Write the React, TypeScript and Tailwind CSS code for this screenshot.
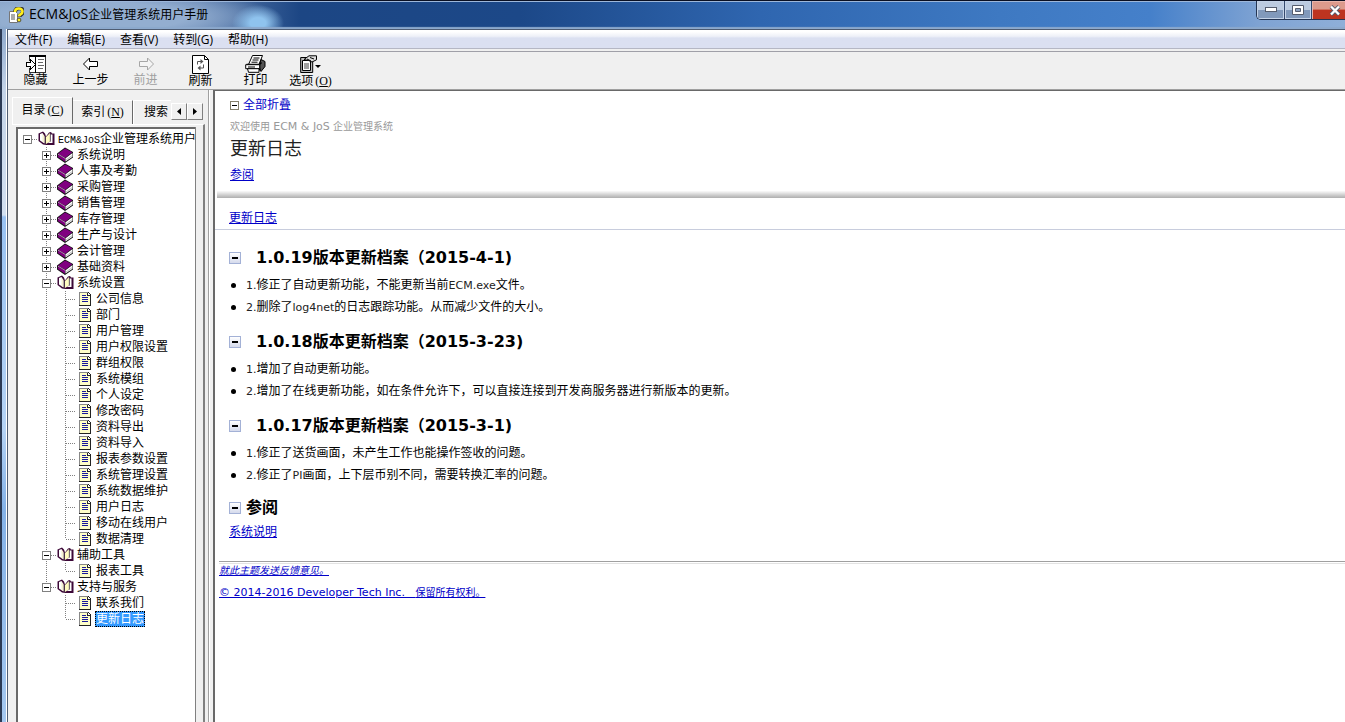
import React from "react";

const SONG = "font-['Liberation_Mono','Noto_Sans_CJK_SC',monospace]";
const UI = "font-['Open_Sans','Noto_Sans_CJK_SC',sans-serif]";
const DOC = "font-['DejaVu_Sans','Noto_Sans_CJK_SC',sans-serif]";

type Kind = "open" | "closed" | "page";
type Row = { depth: number; kind: Kind; label: string; last?: boolean; lastParent?: boolean; selected?: boolean };

const closed = ["系统说明", "人事及考勤", "采购管理", "销售管理", "库存管理", "生产与设计", "会计管理", "基础资料"];
const settings = [
  "公司信息", "部门", "用户管理", "用户权限设置", "群组权限", "系统模组", "个人设定", "修改密码",
  "资料导出", "资料导入", "报表参数设置", "系统管理设置", "系统数据维护", "用户日志", "移动在线用户", "数据清理",
];

const rows: Row[] = [
  ...closed.map((label): Row => ({ depth: 1, kind: "closed", label })),
  { depth: 1, kind: "open", label: "系统设置" },
  ...settings.map((label, i): Row => ({ depth: 2, kind: "page", label, last: i === settings.length - 1 })),
  { depth: 1, kind: "open", label: "辅助工具" },
  { depth: 2, kind: "page", label: "报表工具", last: true },
  { depth: 1, kind: "open", label: "支持与服务", last: true },
  { depth: 2, kind: "page", label: "联系我们", lastParent: true },
  { depth: 2, kind: "page", label: "更新日志", last: true, lastParent: true, selected: true },
];

const versions = [
  { title: "1.0.19版本更新档案（2015-4-1)", items: ["1.修正了自动更新功能，不能更新当前ECM.exe文件。", "2.删除了log4net的日志跟踪功能。从而减少文件的大小。"] },
  { title: "1.0.18版本更新档案（2015-3-23)", items: ["1.增加了自动更新功能。", "2.增加了在线更新功能，如在条件允许下，可以直接连接到开发商服务器进行新版本的更新。"] },
  { title: "1.0.17版本更新档案（2015-3-1)", items: ["1.修正了送货画面，未产生工作也能操作签收的问题。", "2.修正了PI画面，上下层币别不同，需要转换汇率的问题。"] },
];

function ClosedBook() {
  return (
    <svg width="17" height="16" viewBox="0 0 17 16">
      <path d="M0 6.500 8 .5l8 4.500v5.500L8 16 0 10.500z" fill="#111" />
      <path d="M8.500 11.200 15.500 6v3.800L8.500 14.500z" fill="#fff" />
      <path d="M9 13l6-4.300" stroke="#999" strokeWidth=".7" />
      <path d="M1 6.700 8 1.400l7.300 3.900L8.300 10.800z" fill="#800080" />
      <path d="M.8 7.700v2.300L8 14.800v-3.300z" fill="#800080" />
      <path d="M1 7.200l7.200 4.200" stroke="#d9a6d9" strokeWidth=".8" />
    </svg>
  );
}

function OpenBook() {
  return (
    <svg width="17" height="16" viewBox="0 0 17 16">
      <path d="M.5 2.500 5 .5l2 2 1 3 3-4 2-.5 1 1.500h2.500v11.500H8.500L5 13.500.5 10z" fill="#3d0838" />
      <path d="M2 3l2.500-1 2 4v6.500L2 9.500z" fill="#fff" />
      <path d="M4.500 2.500 6.500 5v7l-2-1z" fill="#f4efcf" />
      <path d="M8 6 12 2v8.500L8 13z" fill="#fffbc0" />
      <path d="M12.500 3.500h2v8.500H9.500l3-1.500z" fill="#fff" />
      <path d="M7.300 5.500v8M12.300 2.500v8" stroke="#555" strokeWidth=".7" />
    </svg>
  );
}

function PageIcon() {
  return (
    <svg width="12" height="14" viewBox="0 0 12 14" shapeRendering="crispEdges">
      <path d="M0 0h9l3 3v11H0z" fill="#222" />
      <path d="M0 0h9v1H1v12H0z" fill="#888" />
      <path d="M1 1h7v3h3v9H1z" fill="#ffffc8" />
      <path d="M9 1v2h2z" fill="#fff" />
      <path d="M3 3.500h4M3 5.500h6M3 7.500h6M3 9.500h6" stroke="#1a1a9c" strokeWidth="1" />
    </svg>
  );
}

function Guide({ tail, stub }: { tail: boolean; stub: boolean }) {
  return (
    <svg width="19" height="16" viewBox="0 0 19 16" className="shrink-0" shapeRendering="crispEdges" aria-hidden="true">
      <path d={tail ? "M9.500 0v16" : "M9.500 0v8"} stroke="#808080" strokeDasharray="1 1" />
      {stub && <path d="M10 8.500h9" stroke="#808080" strokeDasharray="1 1" />}
    </svg>
  );
}

function Expander({ minus, root, last, label }: { minus: boolean; root?: boolean; last?: boolean; label: string }) {
  return (
    <button aria-label={label} className="block h-4 w-[19px] shrink-0">
      <svg width="19" height="16" viewBox="0 0 19 16" shapeRendering="crispEdges">
        {!root && <path d={last ? "M9.500 0v8" : "M9.500 0v16"} stroke="#808080" strokeDasharray="1 1" />}
        <path d="M14 8.500h5" stroke="#808080" strokeDasharray="1 1" />
        <rect x="5.500" y="4.500" width="8" height="8" fill="#fff" stroke="#808080" />
        <path d={minus ? "M7 8.500h5" : "M7 8.500h5M9.500 6v5"} stroke="#000" />
      </svg>
    </button>
  );
}

function TreeRow({ row }: { row: Row }) {
  return (
    <li className="flex h-4 items-center whitespace-nowrap">
      <span className="w-[19px] shrink-0" />
      {row.depth === 1 ? (
        <Expander minus={row.kind === "open"} last={row.last} label={row.label} />
      ) : (
        <>
          {row.lastParent ? <span className="w-[19px] shrink-0" /> : <Guide tail stub={false} />}
          <Guide tail={!row.last} stub />
        </>
      )}
      <span className="flex h-4 w-[19px] shrink-0 items-center justify-center">
        {row.kind === "closed" ? <ClosedBook /> : row.kind === "open" ? <OpenBook /> : <PageIcon />}
      </span>
      <a
        href="#topic"
        className={
          row.selected
            ? "ml-px block h-4 bg-[#3399ff] px-px leading-[18px] text-white outline-1 -outline-offset-1 outline-dotted outline-black"
            : "ml-0.5 block h-4 leading-[18px]"
        }
      >
        {row.label}
      </a>
    </li>
  );
}

function HelpIcon() {
  return (
    <svg width="16" height="16" viewBox="0 0 16 16">
      <path d="M1.500 4.500h6l2 2v9h-8z" fill="#fff" stroke="#777" />
      <path d="M3 8h4M3 10h4M3 12h4" stroke="#555" />
      <path d="M7 5c0-5 8-5 8-.5 0 3-3.500 2.500-3.500 5.500" fill="none" stroke="#333" strokeWidth="4" />
      <path d="M7 5c0-4.500 7.500-4.500 7.500-.5 0 2.800-3.500 2.500-3.500 5" fill="none" stroke="#ffee1c" strokeWidth="2.600" />
      <circle cx="11" cy="13" r="1.900" fill="#ffee1c" stroke="#333" strokeWidth=".8" />
    </svg>
  );
}

const toolIcons = {
  hide: (
    <svg width="20" height="18" viewBox="0 0 20 18" shapeRendering="crispEdges">
      <path d="M3.500 6V.5h16v17h-16V13" fill="#fff" stroke="#333" />
      <path d="M3 1h17" stroke="#000" strokeWidth="2" />
      <path d="M9.500 1v17" stroke="#000" />
      <path d="M12 4.500h6M12 7.500h5M12 10.500h6M12 13.500h5" stroke="#666" />
      <path d="M.5 7.500h4v-3l5 5-5 5v-3h-4z" fill="#fff" stroke="#000" />
    </svg>
  ),
  back: (
    <svg width="18" height="18" viewBox="0 0 18 18">
      <path d="M1.500 9 7.500 3v3.500h8v5h-8V15z" fill="#fff" stroke="#000" />
    </svg>
  ),
  forward: (
    <svg width="18" height="18" viewBox="0 0 18 18">
      <path d="M16.500 9l-6-6v3.500h-8v5h8V15z" fill="#f4f4f4" stroke="#a6a6a6" />
    </svg>
  ),
  refresh: (
    <svg width="17" height="19" viewBox="0 0 17 19">
      <path d="M.5.5h12l4 4v14H.5z" fill="#fff" stroke="#000" />
      <path d="M12.500.5v4h4" fill="none" stroke="#000" />
      <path d="M5.500 9.500V6.500h4M11.500 9.500v3.500h-4" fill="none" stroke="#555" />
      <path d="M8.500 4l3 2.500-3 2.500zM8.500 10.500l-3 2.500 3 2.500z" fill="#555" />
    </svg>
  ),
  print: (
    <svg width="21" height="18" viewBox="0 0 21 18">
      <path d="M3.500 9.500 7.500.5h10l-3.500 9" fill="#fff" stroke="#000" />
      <path d="M8.500 3h6M7.500 5h6M6.500 7.200h6" stroke="#000" />
      <path d="M16 4.500l4 2v5l-4 5-2-5z" fill="#555" stroke="#000" />
      <path d="M1.500 9.500h13l2-2M14.500 9.500v6" fill="none" stroke="#000" strokeWidth="1.500" />
      <path d="M.7 9.700h14v4H.7z" fill="#fff" stroke="#000" />
      <path d="M2.500 13.700h11.500v3.600H3.500z" fill="#fff" stroke="#000" />
      <path d="M3 12h7" stroke="#000" />
    </svg>
  ),
  options: (
    <svg width="21" height="18" viewBox="0 0 21 18">
      <path d="M.7 2.500h12v15H.7z" fill="#bbb" stroke="#000" />
      <path d="M2.500 5.500h8v10h-8z" fill="#fff" stroke="#000" />
      <path d="M4 9h5M4 11h5M4 13h5" stroke="#444" />
      <path d="M4 4.500 9 .8h7.500v4L12 7 8.500 5.500z" fill="#ddd" stroke="#000" />
      <path d="M7 4l4 2M10 2.500l4 1.500" stroke="#000" />
      <path d="M15 10h6l-3 3z" fill="#000" />
    </svg>
  ),
};

function Hotkey({ letter }: { letter: string }) {
  return <span className="ml-0.5 font-['Liberation_Serif',serif] text-xs">(<u>{letter}</u>)</span>;
}

function Tool({ icon, label, hotkey, disabled }: { icon: React.ReactNode; label: string; hotkey?: string; disabled?: boolean }) {
  return (
    <button disabled={disabled} className={`flex w-[55px] flex-col items-center whitespace-nowrap ${disabled ? "text-[#a0a0a0]" : "text-black"}`}>
      <span className="flex h-5 items-center">{icon}</span>
      <span className="leading-4">
        {label}
        {hotkey && <Hotkey letter={hotkey} />}
      </span>
    </button>
  );
}

function Toggle({ label }: { label: string }) {
  return (
    <button aria-label={label} className="flex size-3 shrink-0 items-center justify-center border border-[#a3b1d6] bg-linear-to-b from-white to-[#d5daec]">
      <span className="h-0.5 w-1.5 bg-black" />
    </button>
  );
}

/* Latin runs are set one size below the Chinese text around them. */
function Mixed({ text }: { text: string }) {
  return (
    <span>
      {text.split(/([\x21-\x7e]+)/).map((part, i) =>
        i % 2 === 1 ? <span key={i} className="text-[11px] text-[#222]">{part}</span> : part,
      )}
    </span>
  );
}

export default function App() {
  return (
    <div className={`flex h-screen flex-col overflow-hidden bg-[#f0f0f0] text-xs text-black ${UI}`}>
      <header className="flex h-[29px] shrink-0 items-center border-t border-[#0a1023] bg-[radial-gradient(ellipse_26px_18px_at_258px_22px,#8fc3ee_30%,transparent),radial-gradient(ellipse_190px_30px_at_90px_16px,#93aed0_50%,transparent),linear-gradient(90deg,#7f9cc4_0,#5d7eae_200px,#1c4684_300px,#1c4888_520px,#2f66b0_760px,#3e79c2_1000px,#4580ca_1150px,#7fa3d3_1260px,#8fafd8)] pl-2 shadow-[inset_0_1px_0_#9db7da,inset_0_-2px_1px_#8ca9cd]">
        <HelpIcon />
        <h1 className="ml-[5px] flex-1 pb-0.5 leading-5">
          <span className="text-sm">ECM&amp;JoS</span>企业管理系统用户手册
        </h1>
        <div className="flex h-[19px] self-start overflow-hidden rounded-bl-[5px] border-b border-l border-[#243553]">
          <button aria-label="最小化" className="flex w-7 items-center justify-center border-r border-[#34486c] bg-linear-to-b from-[#bccbe0] from-50% to-[#8199bb] to-50% shadow-[inset_0_0_0_1px_#c4d3e8]">
            <svg width="12" height="6" viewBox="0 0 12 6"><rect x=".5" y=".5" width="11" height="4" fill="#fff" stroke="#555d6e" /></svg>
          </button>
          <button aria-label="最大化" className="flex w-[27px] items-center justify-center border-r border-[#34486c] bg-linear-to-b from-[#bccbe0] from-50% to-[#8199bb] to-50% shadow-[inset_0_0_0_1px_#c4d3e8]">
            <svg width="12" height="10" viewBox="0 0 12 10"><path d="M.5.5h11v9H.5z" fill="#fff" stroke="#555d6e" /><path d="M3.500 3.500h5v3h-5z" fill="#8da2c0" stroke="#555d6e" /></svg>
          </button>
          <button aria-label="关闭" className="flex w-[33px] items-center justify-end bg-linear-to-b from-[#dc9a8c] from-45% to-[#bd3420] to-50% pr-1 shadow-[inset_1px_1px_0_#e8b4aa]">
            <svg width="12" height="11" viewBox="0 0 12 11"><path d="M2 1.500l8 8M10 1.500l-8 8" stroke="#555d6e" strokeWidth="4" /><path d="M2 1.500l8 8M10 1.500l-8 8" stroke="#fff" strokeWidth="2.400" /></svg>
          </button>
        </div>
      </header>

      <div className="flex min-h-0 flex-1">
        <div className="w-[7px] shrink-0 border-r border-l-2 border-r-white border-l-[#2b3a55] bg-[linear-gradient(#8ea9cd_0,#c3d3e8_60px,#d3e0f0_186px,#99c2f2_188px,#b5d3f5_400px,#84b2e8_480px,#a5c8f0)]" />
        <div className="flex min-w-0 flex-1 flex-col border-l border-t border-[#4f5d73]">
          <nav className="flex h-[19px] shrink-0 items-center gap-px border-b border-[#b5b7c4] bg-linear-to-b from-white from-10% via-[#eef0f8] via-35% to-[#dbe0f1] to-45%">
            {["文件(F)", "编辑(E)", "查看(V)", "转到(G)", "帮助(H)"].map((m) => (
              <button key={m} className="px-[7px] pt-0.5 leading-4">{m}</button>
            ))}
          </nav>
          <div className={`mt-0.5 flex h-[39px] shrink-0 border-t border-b border-t-[#a0a0a8] border-b-[#a0a0a0] pt-[3px] ${SONG}`}>
            <Tool icon={toolIcons.hide} label="隐藏" />
            <Tool icon={toolIcons.back} label="上一步" />
            <Tool icon={toolIcons.forward} label="前进" disabled />
            <Tool icon={toolIcons.refresh} label="刷新" />
            <Tool icon={toolIcons.print} label="打印" />
            <Tool icon={toolIcons.options} label="选项" hotkey="O" />
          </div>

          <div className="flex min-h-0 flex-1">
            <aside className={`flex w-[201px] shrink-0 flex-col border-r border-[#a0a0a0] pr-[3px] pl-1 ${SONG}`}>
              <div role="tablist" className="flex h-[34px] items-end whitespace-nowrap pt-2">
                <button role="tab" aria-selected="true" className="h-[27px] w-[61px] shrink-0 border-t border-r border-l border-t-white border-r-[#696969] border-l-white pb-0.5">
                  目录<Hotkey letter="C" />
                </button>
                <button role="tab" aria-selected="false" className="h-6 w-[60px] shrink-0 border-t border-r border-t-white border-r-[#696969]">
                  索引<Hotkey letter="N" />
                </button>
                <button role="tab" aria-selected="false" className="h-6 w-[38px] shrink-0 border-t border-l border-white pl-2.5 text-left">搜索</button>
                <div className="mb-1 flex h-[17px]">
                  <button aria-label="向左滚动" className="flex w-4 items-center justify-center border border-t-white border-r-[#808080] border-b-[#808080] border-l-white bg-[#f0f0f0]">
                    <svg width="4" height="7" viewBox="0 0 4 7"><path d="M4 0v7L0 3.500z" /></svg>
                  </button>
                  <button aria-label="向右滚动" className="flex w-4 items-center justify-center border border-t-white border-r-[#808080] border-b-[#808080] border-l-white bg-[#f0f0f0]">
                    <svg width="4" height="7" viewBox="0 0 4 7"><path d="M0 0v7l4-3.500z" /></svg>
                  </button>
                </div>
              </div>
              <div className="flex min-h-0 flex-1 border-t border-r-2 border-t-white border-r-[#808080] pt-0.5 pl-1">
                <div className="min-w-0 flex-1 overflow-hidden border-t-2 border-l-2 border-[#696969] bg-white pt-0.5">
                  <ul>
                    <li className="flex h-4 items-center whitespace-nowrap">
                      <Expander minus root label="ECM&JoS企业管理系统用户" />
                      <span className="flex w-[19px] shrink-0 justify-center"><OpenBook /></span>
                      <a href="#home" className="ml-0.5 h-4 leading-[18px]"><span className="text-[10px]">ECM&amp;JoS</span>企业管理系统用户</a>
                    </li>
                    {rows.map((r, i) => <TreeRow key={i} row={r} />)}
                  </ul>
                </div>
                <div className="w-2 border-l border-[#808080]" />
              </div>
            </aside>
            <div className="w-1 shrink-0 border-l border-white" />

            <main className={`min-w-0 flex-1 overflow-hidden border-t border-l-2 border-[#696969] bg-white ${DOC}`}>
              <div className="ml-0.5 border-b border-[#b4b4b4] bg-linear-to-b from-white from-94% to-[#b9b9b9] pt-1.5 pb-3.5 pl-[13px]">
                <button className="flex items-center gap-1 text-[#0000c8]">
                  <span className="flex size-[9px] items-center justify-center border border-[#85806c]"><span className="h-px w-[5px] bg-black" /></span>
                  <span className="leading-4">全部折叠</span>
                </button>
                <p className="mt-2 text-[10px] leading-3 text-[#999]">欢迎使用 <span className="text-[11px]">ECM &amp; JoS</span> 企业管理系统</p>
                <h2 className="mt-1 text-lg leading-6 text-[#222]">更新日志</h2>
                <p className="mt-1.5 leading-4"><a href="#seealso" className="text-[#0000c8] underline">参阅</a></p>
              </div>
              <p className="border-b border-[#c8cddd] pt-3 pb-[3px] pl-3.5 leading-4">
                <a href="#log" className="text-[#0000c8] underline">更新日志</a>
              </p>
              <div className="pt-1 pl-3.5">
                {versions.map((v) => (
                  <section key={v.title}>
                    <h3 className="flex h-10 items-center gap-[15px] pt-2 text-base font-bold"><Toggle label={v.title} />{v.title}</h3>
                    <ul>
                      {v.items.map((t) => (
                        <li key={t} className="flex h-[22px] items-center gap-2.5 pl-0.5">
                          <span className="size-[5px] shrink-0 rounded-full bg-black" />
                          <Mixed text={t} />
                        </li>
                      ))}
                    </ul>
                  </section>
                ))}
                <h3 className="flex h-9 items-center gap-[5px] pt-2 text-base font-bold"><Toggle label="参阅" />参阅</h3>
                <p className="pt-0.5 leading-4"><a href="#intro" className="text-[#0000c8] underline">系统说明</a></p>
              </div>
              <footer className="mt-[21px] ml-1 border-t border-[#a0a0a0] text-[10px] text-[#0000c8]">
                <div className="mt-px border-t border-[#e3e3e3]" />
                <p className="leading-3.5"><a href="#feedback" className="italic underline">就此主题发送反馈意见。</a></p>
                <p className="mt-2 leading-3.5"><a href="#copyright" className="underline"><span className="text-[11px]">© 2014-2016 Developer Tech Inc. &nbsp;&nbsp;</span>保留所有权利。</a></p>
              </footer>
            </main>
          </div>
        </div>
      </div>
    </div>
  );
}
